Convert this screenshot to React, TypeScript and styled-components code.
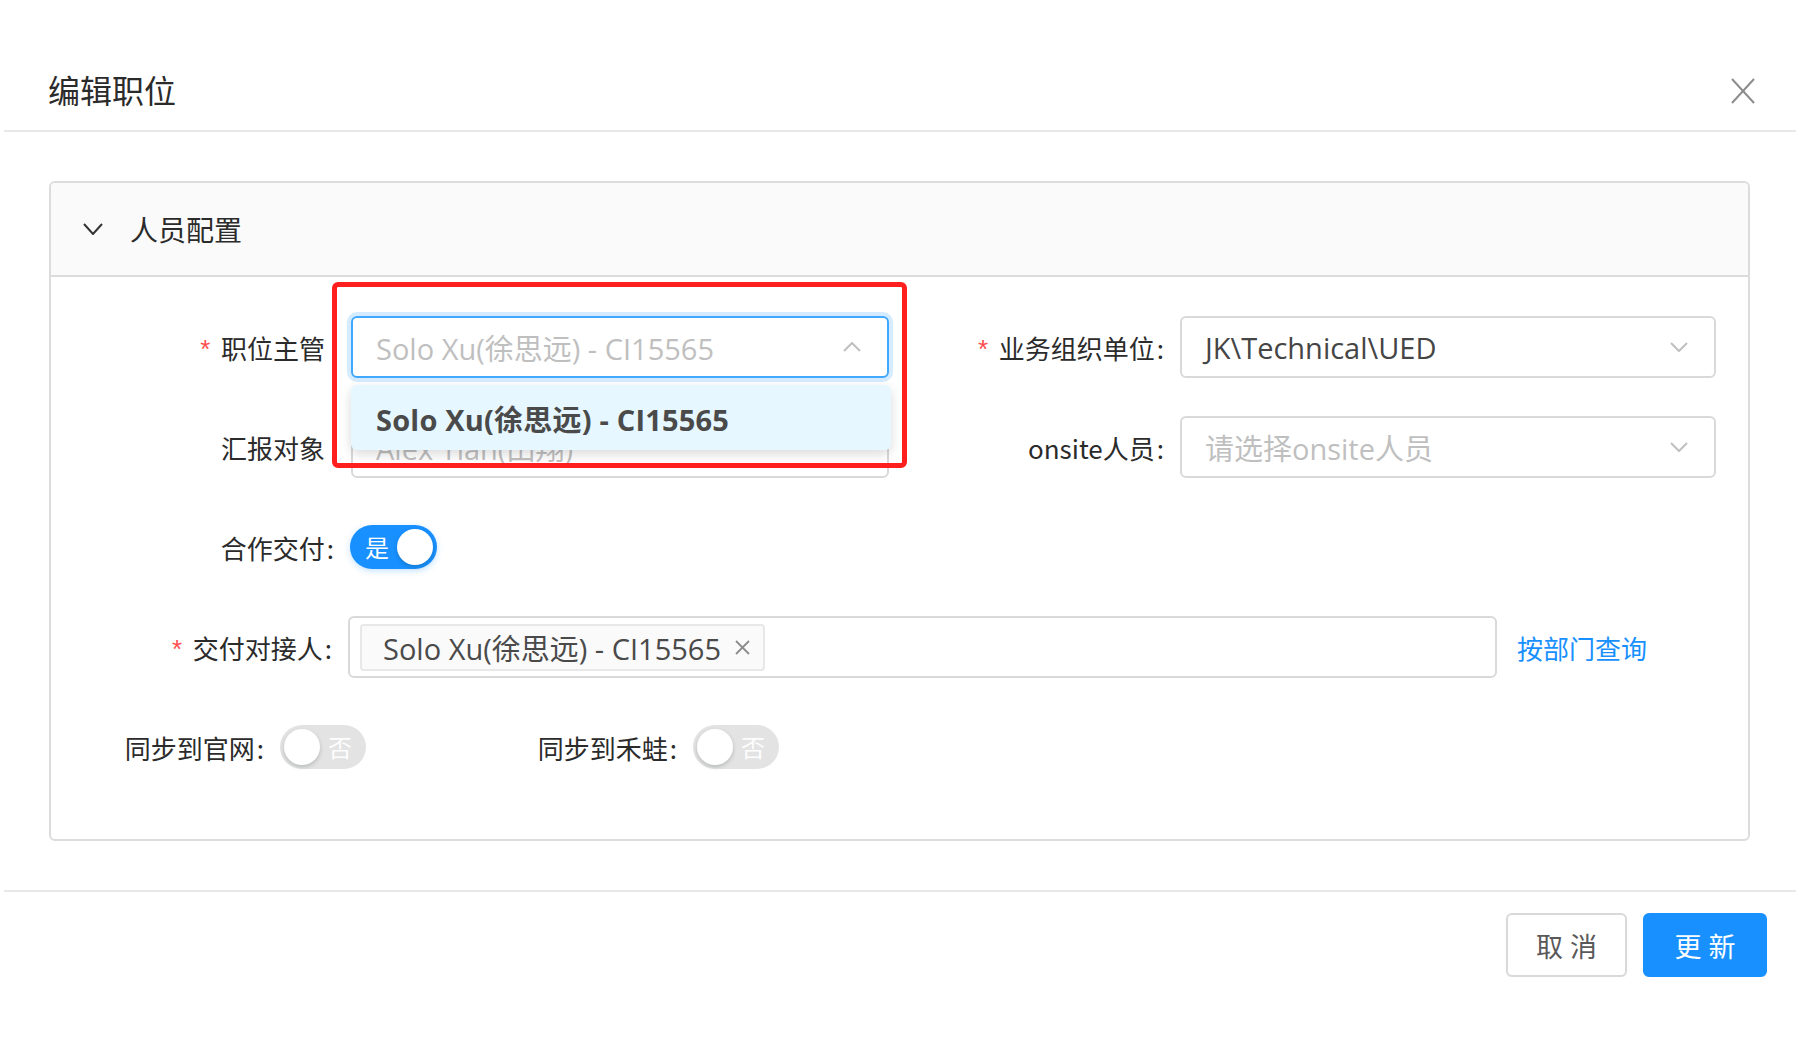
import React from "react";
import styled, { createGlobalStyle } from "styled-components";

const Global = createGlobalStyle`
  html, body { margin: 0; padding: 0; background: #fff; }
  body {
    font-family: "Open Sans", "Noto Sans CJK SC", sans-serif;
    color: #262626;
  }
  * { box-sizing: border-box; }
`;

const Modal = styled.div`
  margin: 0 4px;
  background: #fff;
`;

const Header = styled.header`
  height: 132px;
  padding: 47px 41px 0 44px;
  border-bottom: 2px solid #e8e8e8;
  display: flex;
  align-items: center;
  justify-content: space-between;
`;

const Title = styled.h1`
  margin: 0;
  font-family: "Noto Sans CJK SC", sans-serif;
  font-size: 32px;
  line-height: 1;
  font-weight: 400;
  color: #2b2b2b;
`;

const CloseButton = styled.button`
  border: 0;
  background: transparent;
  padding: 0;
  width: 24px;
  height: 26px;
  display: flex;
  align-items: center;
  justify-content: center;
  cursor: pointer;
  transform: translateY(2px);
`;

const Body = styled.main`
  padding: 49px 46px 49px 45px;
`;

const Panel = styled.section`
  border: 2px solid #dcdcdc;
  border-radius: 6px;
`;

const PanelHeader = styled.div`
  height: 94px;
  background: #fafafa;
  border-bottom: 2px solid #dcdcdc;
  border-radius: 4px 4px 0 0;
  display: flex;
  align-items: center;
  gap: 27px;
  padding-left: 32px;
  font-family: "Noto Sans CJK SC", sans-serif;
  font-size: 28px;
  color: #2b2b2b;
`;

const PanelBody = styled.div`
  padding: 39px 0 61px 0;
  display: flex;
  flex-direction: column;
  gap: 38px;
`;

const Row = styled.div`
  height: 62px;
  display: flex;
  align-items: center;
`;

const Label = styled.label<{ $w: number; $pr: number }>`
  width: ${(p) => p.$w}px;
  flex-shrink: 0;
  padding-right: ${(p) => p.$pr}px;
  display: flex;
  justify-content: flex-end;
  align-items: center;
  white-space: nowrap;
  font-family: "Noto Sans CJK SC", sans-serif;
  font-size: 26px;
  color: #2b2b2b;
`;

const Star = styled.span`
  color: #ff4d4f;
  font-family: "Liberation Mono", monospace;
  font-size: 26px;
  margin-right: 8px;
  transform: translateY(5px);
`;

const Colon = styled.span`
  margin-left: 2px;
`;

const SelectWrap = styled.div`
  position: relative;
  flex-shrink: 0;
`;

const SelectBox = styled.div<{ $w: number; $focused?: boolean }>`
  width: ${(p) => p.$w}px;
  height: 62px;
  border: 2px solid ${(p) => (p.$focused ? "#40a9ff" : "#d9d9d9")};
  box-shadow: ${(p) => (p.$focused ? "0 0 0 4px rgba(24,144,255,0.18)" : "none")};
  border-radius: 6px;
  background: #fff;
  display: flex;
  align-items: center;
  justify-content: space-between;
  padding: 0 26px 0 23px;
  flex-shrink: 0;
`;

const Value = styled.span<{ $placeholder?: boolean }>`
  font-size: 29px;
  color: ${(p) => (p.$placeholder ? "#bfbfbf" : "#454545")};
  white-space: nowrap;
`;

const Dropdown = styled.div`
  position: absolute;
  left: 0;
  top: 69px;
  width: 540px;
  height: 65px;
  background: #e6f7ff;
  border-radius: 6px;
  box-shadow: 0 4px 12px rgba(0, 0, 0, 0.15);
  display: flex;
  align-items: center;
  padding-left: 25px;
  z-index: 10;
`;

const Option = styled.span`
  font-size: 29px;
  font-weight: 700;
  letter-spacing: 0.2px;
  color: #4a4a4a;
  white-space: nowrap;
`;

const Highlight = styled.div`
  position: absolute;
  left: -19px;
  top: -34px;
  width: 575px;
  height: 186px;
  border: 5px solid #ff1f1f;
  border-radius: 6px;
  pointer-events: none;
  z-index: 20;
`;

const SwitchTrack = styled.div<{ $on?: boolean }>`
  width: ${(p) => (p.$on ? 87 : 86)}px;
  height: 44px;
  border-radius: 22px;
  background: ${(p) => (p.$on ? "#1890ff" : "#e3e3e3")};
  display: flex;
  flex-direction: ${(p) => (p.$on ? "row" : "row-reverse")};
  align-items: center;
  justify-content: space-between;
  padding: 0 4px 0 ${(p) => (p.$on ? 15 : 4)}px;
  ${(p) => (p.$on ? "" : "padding-right: 14px;")}
  flex-shrink: 0;
  box-shadow: ${(p) => (p.$on ? "0 2px 6px rgba(24,144,255,0.25)" : "none")};
`;

const SwitchText = styled.span<{ $on?: boolean }>`
  font-family: "Noto Sans CJK SC", sans-serif;
  font-size: 24px;
  line-height: 1;
  color: ${(p) => (p.$on ? "#fff" : "rgba(255,255,255,0.95)")};
`;

const Knob = styled.span`
  width: 36px;
  height: 36px;
  border-radius: 50%;
  background: #fff;
  box-shadow: 0 2px 4px rgba(0, 35, 11, 0.2);
`;

const MultiSelect = styled.div<{ $w: number }>`
  width: ${(p) => p.$w}px;
  height: 62px;
  border: 2px solid #d9d9d9;
  border-radius: 6px;
  display: flex;
  align-items: center;
  padding: 0 10px;
  flex-shrink: 0;
`;

const Tag = styled.span`
  height: 47px;
  display: inline-flex;
  align-items: center;
  gap: 14px;
  padding: 0 13px 0 21px;
  background: #fafafa;
  border: 2px solid #e8e8e8;
  border-radius: 4px;
  font-size: 29px;
  color: #4a4a4a;
  white-space: nowrap;
`;

const Link = styled.a`
  margin-left: 20px;
  font-family: "Noto Sans CJK SC", sans-serif;
  font-size: 26px;
  color: #1890ff;
  text-decoration: none;
  cursor: pointer;
`;

const Footer = styled.footer`
  border-top: 2px solid #e8e8e8;
  padding: 21px 29px 0 0;
  display: flex;
  justify-content: flex-end;
  gap: 16px;
`;

const Button = styled.button<{ $primary?: boolean; $w: number }>`
  width: ${(p) => p.$w}px;
  height: 64px;
  border-radius: 6px;
  border: 2px solid ${(p) => (p.$primary ? "#1890ff" : "#d9d9d9")};
  background: ${(p) => (p.$primary ? "#1890ff" : "#fff")};
  color: ${(p) => (p.$primary ? "#fff" : "#595959")};
  font-family: "Noto Sans CJK SC", sans-serif;
  font-size: 27px;
  letter-spacing: 7px;
  padding: 0 0 0 7px;
  box-shadow: 0 2px 2px rgba(0, 0, 0, 0.03);
  cursor: pointer;
`;

const Chevron = ({ up, color = "#bfbfbf", w = 18, h = 10 }: { up?: boolean; color?: string; w?: number; h?: number }) => (
  <svg width={w} height={h} viewBox={`0 0 ${w} ${h}`} fill="none">
    {up ? (
      <polyline points={`1,${h - 1} ${w / 2},1 ${w - 1},${h - 1}`} stroke={color} strokeWidth="2" />
    ) : (
      <polyline points={`1,1 ${w / 2},${h - 1} ${w - 1},1`} stroke={color} strokeWidth="2" />
    )}
  </svg>
);

const CloseIcon = () => (
  <svg width="24" height="26" viewBox="0 0 24 26" fill="none">
    <line x1="1" y1="1" x2="23" y2="25" stroke="#8c8c8c" strokeWidth="2" />
    <line x1="23" y1="1" x2="1" y2="25" stroke="#8c8c8c" strokeWidth="2" />
  </svg>
);

const TagClose = () => (
  <svg width="15" height="15" viewBox="0 0 15 15" fill="none">
    <line x1="1" y1="1" x2="14" y2="14" stroke="#8c8c8c" strokeWidth="1.8" />
    <line x1="14" y1="1" x2="1" y2="14" stroke="#8c8c8c" strokeWidth="1.8" />
  </svg>
);

const Switch = ({ on, text }: { on?: boolean; text: string }) => (
  <SwitchTrack $on={on}>
    <SwitchText $on={on}>{text}</SwitchText>
    <Knob />
  </SwitchTrack>
);

export default function App() {
  return (
    <>
      <Global />
      <Modal>
        <Header>
          <Title>编辑职位</Title>
          <CloseButton aria-label="关闭">
            <CloseIcon />
          </CloseButton>
        </Header>
        <Body>
          <Panel>
            <PanelHeader>
              <Chevron color="#333" w={20} h={12} />
              <span>人员配置</span>
            </PanelHeader>
            <PanelBody>
              <Row>
                <Label $w={300} $pr={26}>
                  <Star>*</Star>职位主管
                </Label>
                <SelectWrap>
                  <SelectBox $w={538} $focused>
                    <Value $placeholder>Solo Xu(徐思远) - CI15565</Value>
                    <Chevron up />
                  </SelectBox>
                  <Dropdown>
                    <Option>Solo Xu(徐思远) - CI15565</Option>
                  </Dropdown>
                  <Highlight />
                </SelectWrap>
                <Label $w={291} $pr={16}>
                  <Star>*</Star>业务组织单位<Colon>:</Colon>
                </Label>
                <SelectBox $w={536}>
                  <Value>JK\Technical\UED</Value>
                  <Chevron />
                </SelectBox>
              </Row>
              <Row>
                <Label $w={300} $pr={26}>
                  汇报对象
                </Label>
                <SelectBox $w={538}>
                  <Value $placeholder>Alex Tian(田翔)</Value>
                </SelectBox>
                <Label $w={291} $pr={16}>
                  onsite人员<Colon>:</Colon>
                </Label>
                <SelectBox $w={536}>
                  <Value $placeholder>请选择onsite人员</Value>
                  <Chevron />
                </SelectBox>
              </Row>
              <Row>
                <Label $w={299} $pr={16}>
                  合作交付<Colon>:</Colon>
                </Label>
                <Switch on text="是" />
              </Row>
              <Row>
                <Label $w={297} $pr={16}>
                  <Star>*</Star>交付对接人<Colon>:</Colon>
                </Label>
                <MultiSelect $w={1149}>
                  <Tag>
                    Solo Xu(徐思远) - CI15565
                    <TagClose />
                  </Tag>
                </MultiSelect>
                <Link>按部门查询</Link>
              </Row>
              <Row>
                <Label $w={229} $pr={16}>
                  同步到官网<Colon>:</Colon>
                </Label>
                <Switch text="否" />
                <Label $w={327} $pr={16}>
                  同步到禾蛙<Colon>:</Colon>
                </Label>
                <Switch text="否" />
              </Row>
            </PanelBody>
          </Panel>
        </Body>
        <Footer>
          <Button $w={121}>取消</Button>
          <Button $w={124} $primary>
            更新
          </Button>
        </Footer>
      </Modal>
    </>
  );
}
